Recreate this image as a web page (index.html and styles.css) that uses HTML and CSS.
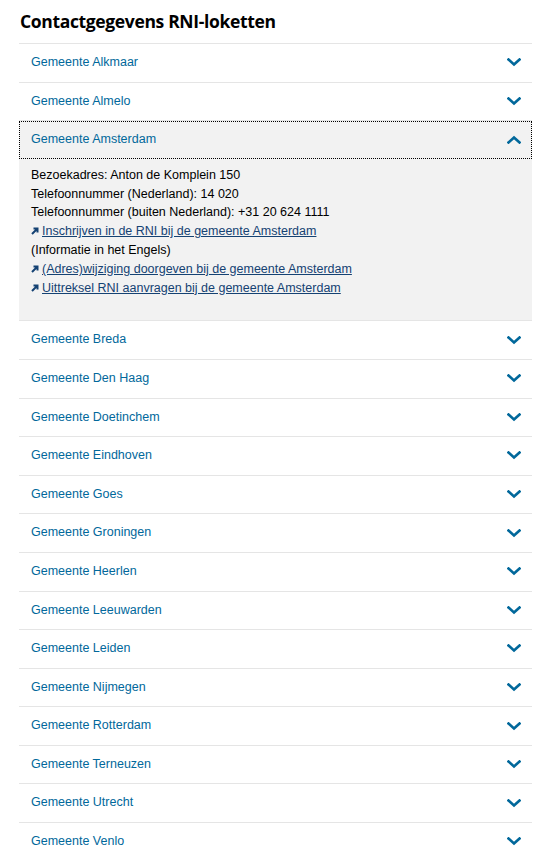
FILE: index.html
```html
<!DOCTYPE html>
<html lang="nl">
<head>
<meta charset="utf-8">
<title>Contactgegevens RNI-loketten</title>
<link rel="stylesheet" href="styles.css">
</head>
<body>
<div class="page">
  <h2 class="title">Contactgegevens RNI-loketten</h2>
  <div class="accordion">
    <div class="item"><div class="head"><span>Gemeente Alkmaar</span><svg class="chev" viewBox="0 0 14 9"><path d="M1.5 1.5 L7 6.5 L12.5 1.5"/></svg></div></div>
    <div class="item"><div class="head"><span>Gemeente Almelo</span><svg class="chev" viewBox="0 0 14 9"><path d="M1.5 1.5 L7 6.5 L12.5 1.5"/></svg></div></div>
    <div class="item open">
      <div class="head focus"><span>Gemeente Amsterdam</span><svg class="chev" viewBox="0 0 14 9"><path d="M1.5 7.5 L7 2.5 L12.5 7.5"/></svg></div>
      <div class="panel">
        <p>Bezoekadres: Anton de Komplein 150</p>
        <p>Telefoonnummer (Nederland): 14 020</p>
        <p>Telefoonnummer (buiten Nederland): +31 20 624 1111</p>
        <p><svg class="ext" viewBox="0 0 8 8"><path d="M1 7 L6 2 M2.5 1.5 H6.5 V5.5"/></svg><a href="#">Inschrijven in de RNI bij de gemeente Amsterdam</a></p>
        <p>(Informatie in het Engels)</p>
        <p><svg class="ext" viewBox="0 0 8 8"><path d="M1 7 L6 2 M2.5 1.5 H6.5 V5.5"/></svg><a href="#">(Adres)wijziging doorgeven bij de gemeente Amsterdam</a></p>
        <p><svg class="ext" viewBox="0 0 8 8"><path d="M1 7 L6 2 M2.5 1.5 H6.5 V5.5"/></svg><a href="#">Uittreksel RNI aanvragen bij de gemeente Amsterdam</a></p>
      </div>
    </div>
    <div class="item"><div class="head"><span>Gemeente Breda</span><svg class="chev" viewBox="0 0 14 9"><path d="M1.5 1.5 L7 6.5 L12.5 1.5"/></svg></div></div>
    <div class="item"><div class="head"><span>Gemeente Den Haag</span><svg class="chev" viewBox="0 0 14 9"><path d="M1.5 1.5 L7 6.5 L12.5 1.5"/></svg></div></div>
    <div class="item"><div class="head"><span>Gemeente Doetinchem</span><svg class="chev" viewBox="0 0 14 9"><path d="M1.5 1.5 L7 6.5 L12.5 1.5"/></svg></div></div>
    <div class="item"><div class="head"><span>Gemeente Eindhoven</span><svg class="chev" viewBox="0 0 14 9"><path d="M1.5 1.5 L7 6.5 L12.5 1.5"/></svg></div></div>
    <div class="item"><div class="head"><span>Gemeente Goes</span><svg class="chev" viewBox="0 0 14 9"><path d="M1.5 1.5 L7 6.5 L12.5 1.5"/></svg></div></div>
    <div class="item"><div class="head"><span>Gemeente Groningen</span><svg class="chev" viewBox="0 0 14 9"><path d="M1.5 1.5 L7 6.5 L12.5 1.5"/></svg></div></div>
    <div class="item"><div class="head"><span>Gemeente Heerlen</span><svg class="chev" viewBox="0 0 14 9"><path d="M1.5 1.5 L7 6.5 L12.5 1.5"/></svg></div></div>
    <div class="item"><div class="head"><span>Gemeente Leeuwarden</span><svg class="chev" viewBox="0 0 14 9"><path d="M1.5 1.5 L7 6.5 L12.5 1.5"/></svg></div></div>
    <div class="item"><div class="head"><span>Gemeente Leiden</span><svg class="chev" viewBox="0 0 14 9"><path d="M1.5 1.5 L7 6.5 L12.5 1.5"/></svg></div></div>
    <div class="item"><div class="head"><span>Gemeente Nijmegen</span><svg class="chev" viewBox="0 0 14 9"><path d="M1.5 1.5 L7 6.5 L12.5 1.5"/></svg></div></div>
    <div class="item"><div class="head"><span>Gemeente Rotterdam</span><svg class="chev" viewBox="0 0 14 9"><path d="M1.5 1.5 L7 6.5 L12.5 1.5"/></svg></div></div>
    <div class="item"><div class="head"><span>Gemeente Terneuzen</span><svg class="chev" viewBox="0 0 14 9"><path d="M1.5 1.5 L7 6.5 L12.5 1.5"/></svg></div></div>
    <div class="item"><div class="head"><span>Gemeente Utrecht</span><svg class="chev" viewBox="0 0 14 9"><path d="M1.5 1.5 L7 6.5 L12.5 1.5"/></svg></div></div>
    <div class="item"><div class="head"><span>Gemeente Venlo</span><svg class="chev" viewBox="0 0 14 9"><path d="M1.5 1.5 L7 6.5 L12.5 1.5"/></svg></div></div>
  </div>
</div>
</body>
</html>
```
FILE: styles.css
```css
html, body {
  margin: 0;
  padding: 0;
  background: #fff;
}
body {
  font-family: "Liberation Sans", Arial, sans-serif;
  color: #000;
  overflow: hidden;
}
.page {
  padding: 0 23px 0 19px;
}
.title {
  margin: 0;
  padding: 9px 0 0 1px;
  height: 34px;
  font-size: 17.5px;
  font-weight: bold;
  line-height: 24px;
  font-family: "Open Sans", "Liberation Sans", sans-serif;
  letter-spacing: -0.35px;
}
.accordion {
  border-top: 1px solid #e5e5e5;
}
.item {
  border-bottom: 1px solid #e5e5e5;
}
.head {
  display: flex;
  align-items: center;
  justify-content: space-between;
  padding: 9px 11px 9px 12px;
  height: 19.6px;
  font-size: 12.5px;
  line-height: 19.6px;
  color: #01689b;
}
.item.open {
  background: #f2f2f2;
}
.head.focus {
  outline: 1px dotted #000;
  outline-offset: -1px;
}
.chev {
  width: 14px;
  height: 9px;
  fill: none;
  stroke: #01689b;
  stroke-width: 2.6;
  stroke-linecap: square;
}
.panel {
  padding: 7px 12px 23px;
  font-size: 12.5px;
  line-height: 18.8px;
}
.panel p {
  margin: 0;
}
.panel a {
  color: #154273;
  text-decoration: underline;
}
.ext {
  width: 8px;
  height: 8px;
  margin-right: 3px;
  fill: none;
  stroke: #154273;
  stroke-width: 2;
  vertical-align: 0;
}
```
